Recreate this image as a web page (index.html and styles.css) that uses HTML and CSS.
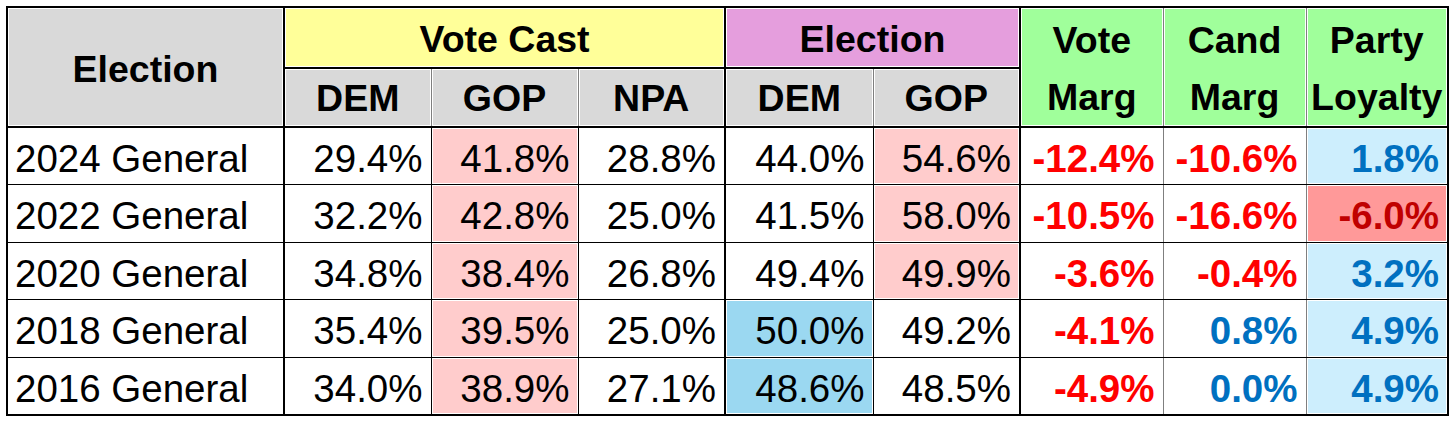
FILE: index.html
```html
<!DOCTYPE html>
<html>
<head>
<meta charset="utf-8">
<link rel="stylesheet" href="styles.css">
</head>
<body>
<table class="grid">
  <colgroup>
    <col class="c-name">
    <col class="c-num"><col class="c-num"><col class="c-num">
    <col class="c-num2"><col class="c-num">
    <col class="c-marg"><col class="c-marg"><col class="c-loy">
  </colgroup>
  <thead>
    <tr class="h1">
      <th rowspan="2" class="gray thick-r">Election</th>
      <th colspan="3" class="yellow thick-r">Vote Cast</th>
      <th colspan="2" class="purple thick-r">Election</th>
      <th rowspan="2" class="green two">Vote<br>Marg</th>
      <th rowspan="2" class="green two">Cand<br>Marg</th>
      <th rowspan="2" class="green two">Party<br>Loyalty</th>
    </tr>
    <tr class="h2">
      <th class="gray">DEM</th>
      <th class="gray">GOP</th>
      <th class="gray thick-r">NPA</th>
      <th class="gray">DEM</th>
      <th class="gray thick-r">GOP</th>
    </tr>
  </thead>
  <tbody>
    <tr>
      <td class="name thick-r">2024 General</td>
      <td>29.4%</td><td class="pink">41.8%</td><td class="thick-r">28.8%</td>
      <td>44.0%</td><td class="pink thick-r">54.6%</td>
      <td class="b red">-12.4%</td><td class="b red">-10.6%</td><td class="b blue lblue">1.8%</td>
    </tr>
    <tr>
      <td class="name thick-r">2022 General</td>
      <td>32.2%</td><td class="pink">42.8%</td><td class="thick-r">25.0%</td>
      <td>41.5%</td><td class="pink thick-r">58.0%</td>
      <td class="b red">-10.5%</td><td class="b red">-16.6%</td><td class="b dred salmon">-6.0%</td>
    </tr>
    <tr>
      <td class="name thick-r">2020 General</td>
      <td>34.8%</td><td class="pink">38.4%</td><td class="thick-r">26.8%</td>
      <td>49.4%</td><td class="pink thick-r">49.9%</td>
      <td class="b red">-3.6%</td><td class="b red">-0.4%</td><td class="b blue lblue">3.2%</td>
    </tr>
    <tr>
      <td class="name thick-r">2018 General</td>
      <td>35.4%</td><td class="pink">39.5%</td><td class="thick-r">25.0%</td>
      <td class="sky">50.0%</td><td class="thick-r">49.2%</td>
      <td class="b red">-4.1%</td><td class="b blue">0.8%</td><td class="b blue lblue">4.9%</td>
    </tr>
    <tr>
      <td class="name thick-r">2016 General</td>
      <td>34.0%</td><td class="pink">38.9%</td><td class="thick-r">27.1%</td>
      <td class="sky">48.6%</td><td class="thick-r">48.5%</td>
      <td class="b red">-4.9%</td><td class="b blue">0.0%</td><td class="b blue lblue">4.9%</td>
    </tr>
  </tbody>
</table>
</body>
</html>
```
FILE: styles.css
```css
html, body {
  margin: 0;
  padding: 0;
  background: #ffffff;
}

body {
  padding: 6px 0 0 6px;
  font-family: "Liberation Sans", Arial, sans-serif;
  color: #000;
}

.grid {
  border-collapse: collapse;
  table-layout: fixed;
  width: 1442px;
  border: 2px solid #000;
}

.c-name { width: 277px; }
.c-num { width: 147px; }
.c-num2 { width: 148px; }
.c-marg { width: 143px; }
.c-loy { width: 142px; }

th, td {
  padding: 0;
  border: 1px solid #000;
  box-shadow: inset 0 0 0 1px #fff;
}

th {
  font-weight: 700;
  font-size: 37.5px;
  text-align: center;
  vertical-align: middle;
  line-height: 40px;
}

.h1 { height: 60px; }
.h2 { height: 59px; }

.h1 th { border-bottom: 2px solid #000; padding-top: 4px; }
.h2 th { border-bottom: 2px solid #000; border-right-color: #7f7f7f; padding-top: 2px; }
.h2 th.thick-r { border-right: 2px solid #000; }

th.two {
  line-height: 57px;
  padding-top: 4px;
  border-left-color: #7f7f7f;
  border-right-color: #7f7f7f;
}

.gray { background: #d9d9d9; }
.yellow { background: #ffff99; }
.purple { background: #e59edd; }
.green { background: #a0ff9b; }

tbody tr { height: 57.5px; }

td {
  font-size: 38.5px;
  text-align: right;
  vertical-align: middle;
  padding: 6px 8px 0 0;
  line-height: 40px;
  white-space: nowrap;
}

td.name {
  text-align: left;
  padding-left: 7px;
  padding-right: 0;
}

.thick-r { border-right: 2px solid #000; }

tbody td:nth-child(7),
tbody td:nth-child(8),
tbody td:nth-child(9) {
  border-left-color: #7f7f7f;
  border-right-color: #7f7f7f;
}

.b { font-weight: 700; }
.red { color: #ff0000; }
.blue { color: #0070c0; }
.dred { color: #c00000; }

.pink { background: #ffcccc; }
.sky { background: #9bd8f1; }
.lblue { background: #cdeefd; }
.salmon { background: #ff9999; }
```
